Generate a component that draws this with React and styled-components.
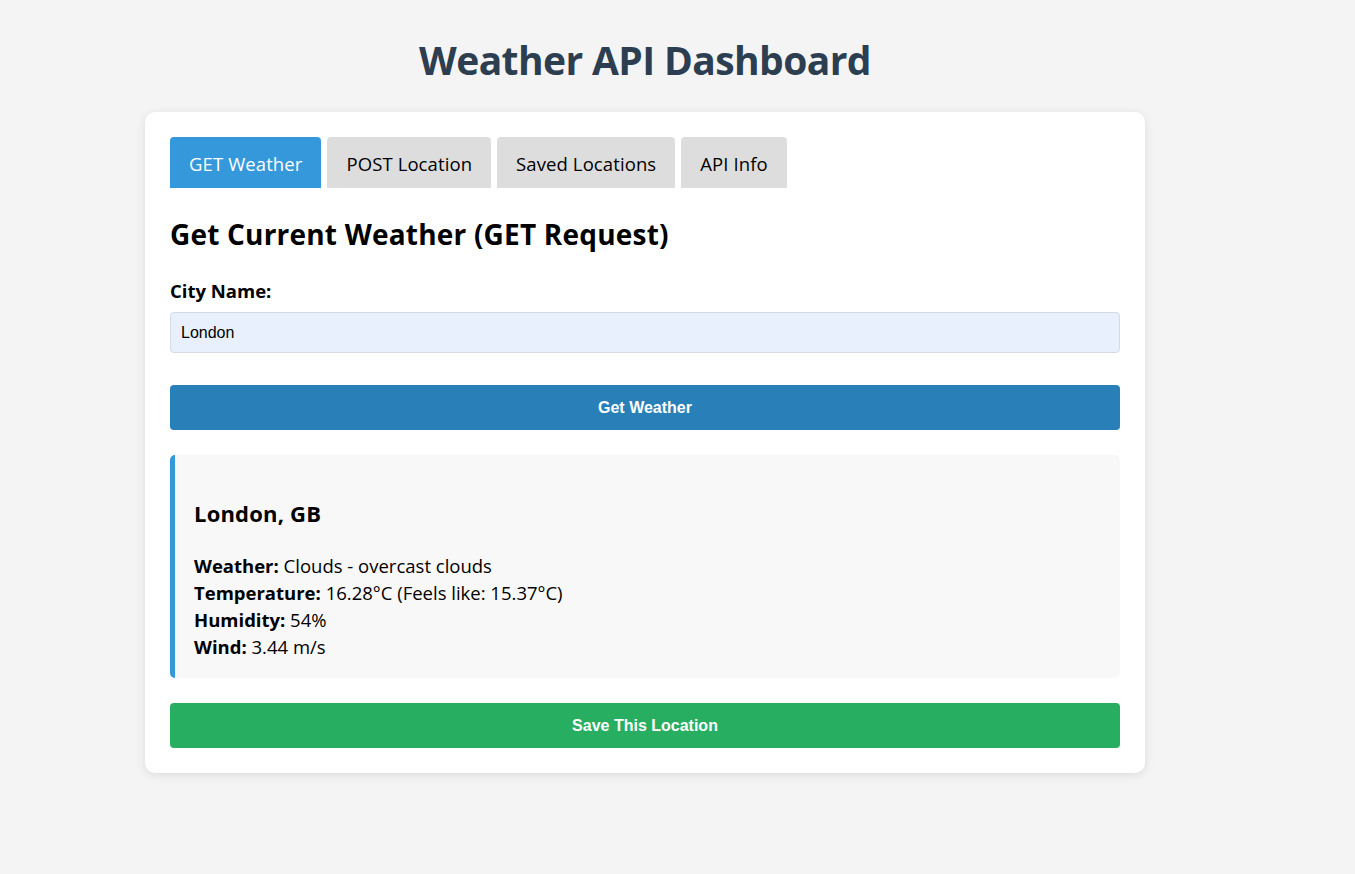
import styled, { createGlobalStyle } from "styled-components"

const GlobalStyle = createGlobalStyle`
  html, body {
    margin: 0;
    padding: 0;
    background: #f4f4f4;
    font-family: "Open Sans", "Noto Sans", sans-serif;
    color: #000;
  }
  * { box-sizing: border-box; }
`

const Page = styled.div`
  min-height: 874px;
  display: flex;
  flex-direction: column;
  align-items: center;
  padding: 34px 65px 40px 0;
`

const Title = styled.h1`
  margin: 0 0 26px;
  font-size: 39px;
  line-height: 52px;
  font-weight: 700;
  color: #2c3e50;
  letter-spacing: -0.6px;
`

const Card = styled.div`
  width: 1000px;
  background: #fff;
  border-radius: 10px;
  padding: 25px;
  box-shadow: 0 2px 10px rgba(0, 0, 0, 0.1);
`

const Tabs = styled.div`
  display: flex;
  gap: 6px;
`

const Tab = styled.button`
  border: none;
  border-radius: 4px 4px 0 0;
  height: 51px;
  padding: 1px 19px 0;
  font-family: "Open Sans", sans-serif;
  font-size: 18.5px;
  letter-spacing: 0.1px;
  cursor: pointer;
  background: ${(props) => (props.active ? "#3498db" : "#ddd")};
  color: ${(props) => (props.active ? "#fff" : "#000")};
`

const Heading = styled.h2`
  margin: 26px 0 25px;
  font-size: 28px;
  line-height: 40px;
  font-weight: 700;
  letter-spacing: 0.2px;
`

const Label = styled.label`
  display: block;
  font-size: 18.5px;
  font-weight: 700;
  line-height: 24px;
  margin: 0 0 9px;
`

const Input = styled.input`
  display: block;
  width: 100%;
  height: 41px;
  padding: 0 10px;
  border: 1px solid #d5dbe3;
  border-radius: 4px;
  background: #e8f0fe;
  font-family: "Liberation Sans", Arial, sans-serif;
  font-size: 16px;
  color: #000;
  outline: none;
`

const ActionButton = styled.button`
  display: block;
  width: 100%;
  height: 45px;
  border: none;
  border-radius: 4px;
  background: ${(props) => props.color};
  color: #fff;
  font-family: "Liberation Sans", Arial, sans-serif;
  font-size: 16px;
  font-weight: 700;
  cursor: pointer;
  margin-top: ${(props) => props.top}px;
`

const Result = styled.div`
  margin-top: 25px;
  background: #f8f8f8;
  border-left: 5px solid #3498db;
  border-radius: 5px;
  padding: 39px 19px 18px;
`

const City = styled.h3`
  margin: 0 0 20px;
  font-size: 22px;
  line-height: 38px;
  font-weight: 700;
  letter-spacing: 0.2px;
`

const Line = styled.p`
  margin: 0;
  font-size: 18.5px;
  line-height: 27px;

  strong {
    font-weight: 700;
  }
`

export default function App() {
  return (
    <>
      <GlobalStyle />
      <Page>
        <Title>Weather API Dashboard</Title>
        <Card>
          <Tabs>
            <Tab active>GET Weather</Tab>
            <Tab>POST Location</Tab>
            <Tab>Saved Locations</Tab>
            <Tab>API Info</Tab>
          </Tabs>

          <Heading>Get Current Weather (GET Request)</Heading>

          <Label htmlFor="city">City Name:</Label>
          <Input id="city" type="text" defaultValue="London" />

          <ActionButton color="#2980b9" top={32}>Get Weather</ActionButton>

          <Result>
            <City>London, GB</City>
            <Line><strong>Weather:</strong> Clouds - overcast clouds</Line>
            <Line><strong>Temperature:</strong> 16.28°C (Feels like: 15.37°C)</Line>
            <Line><strong>Humidity:</strong> 54%</Line>
            <Line><strong>Wind:</strong> 3.44 m/s</Line>
          </Result>

          <ActionButton color="#27ae60" top={25}>Save This Location</ActionButton>
        </Card>
      </Page>
    </>
  )
}
